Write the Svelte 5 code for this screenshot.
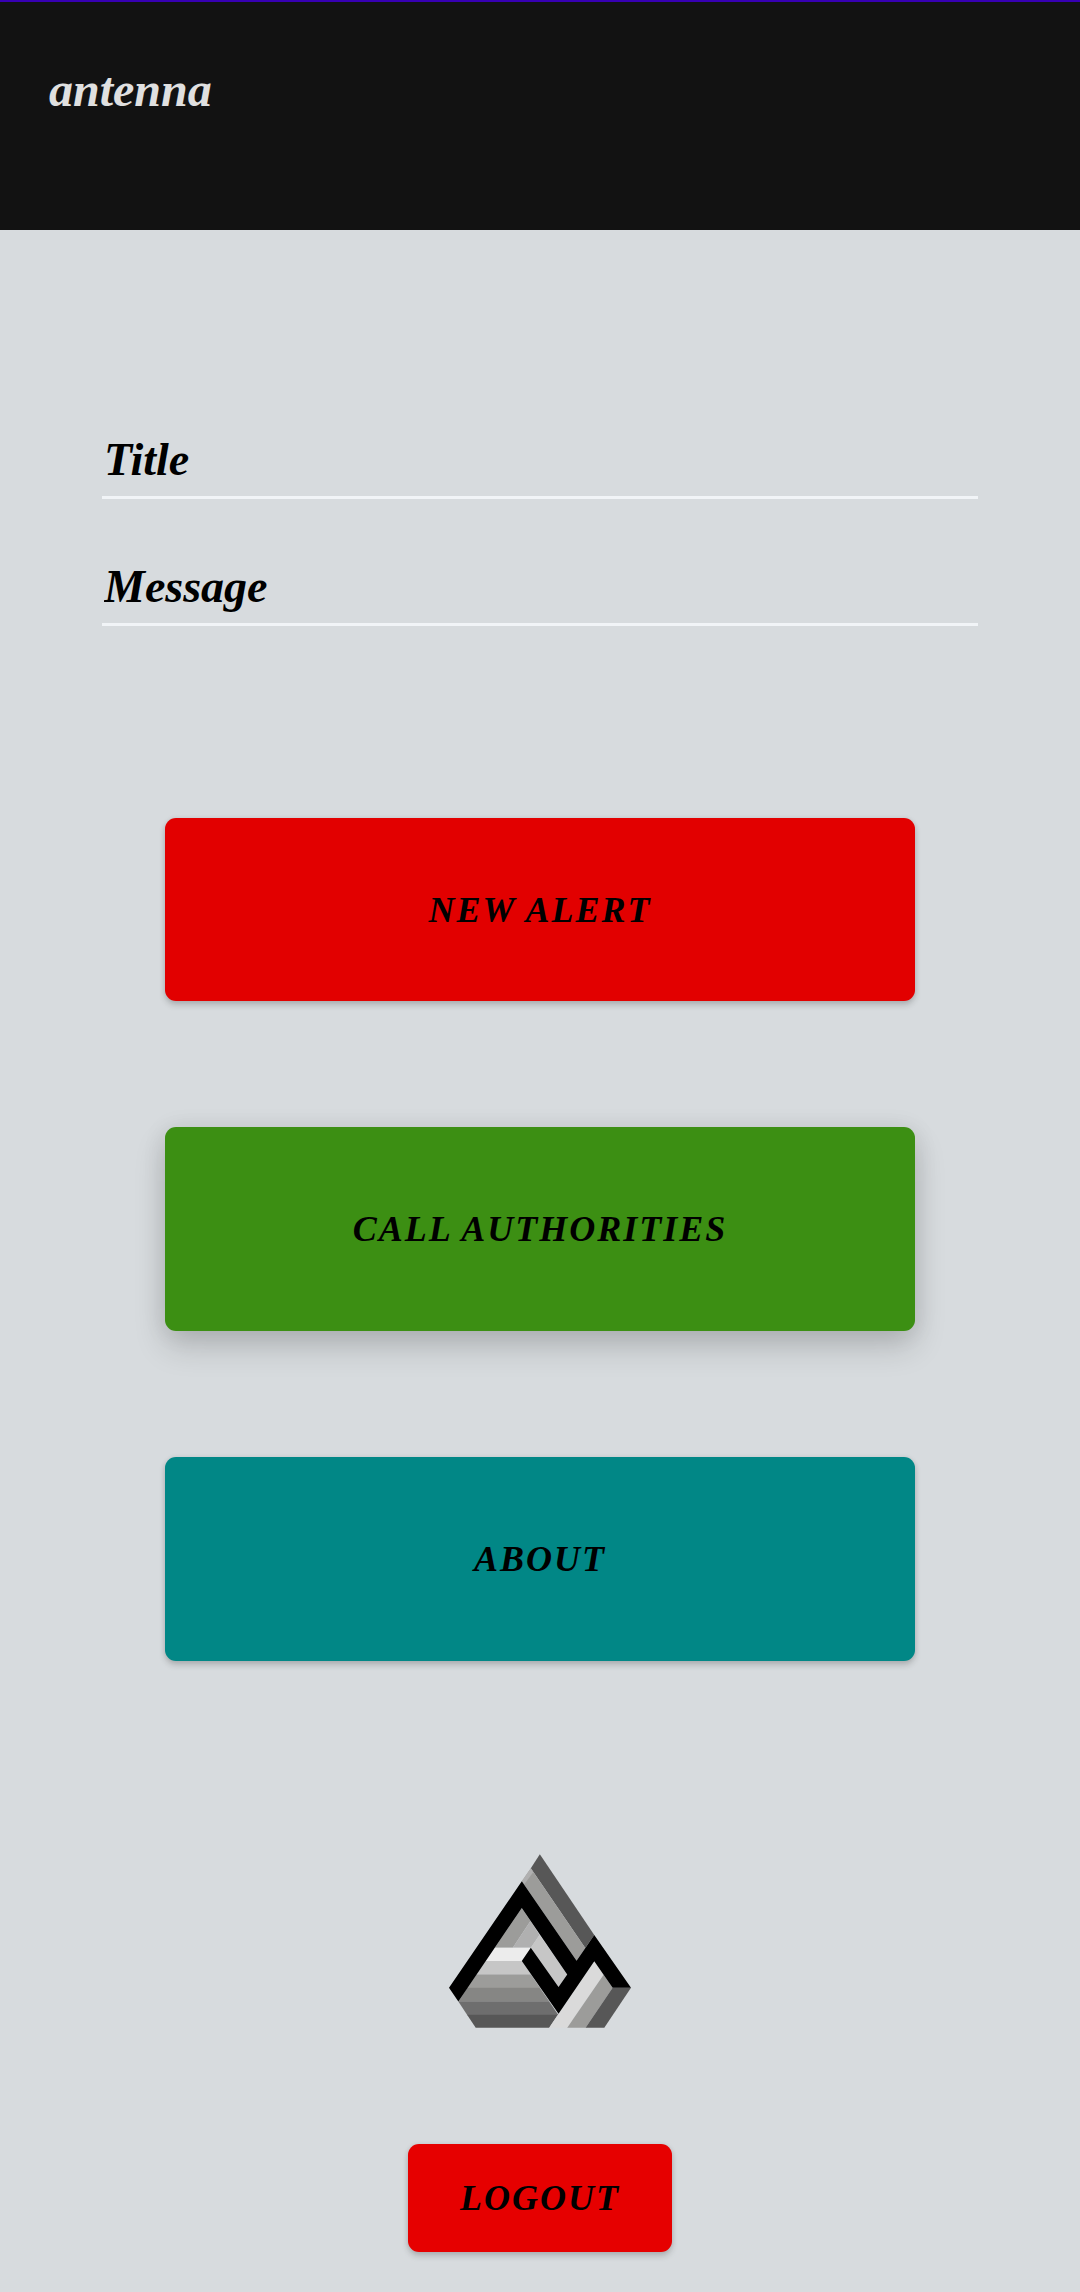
<script>
  let title = $state('');
  let message = $state('');

  const actions = [
    { label: 'NEW ALERT', kind: 'alert' },
    { label: 'CALL AUTHORITIES', kind: 'call' },
    { label: 'ABOUT', kind: 'about' }
  ];
</script>

<div class="page">
  <header>
    <h1>antenna</h1>
  </header>

  <main>
    <form class="fields" onsubmit={(e) => e.preventDefault()}>
      <input type="text" aria-label="Title" placeholder="Title" bind:value={title} />
      <input type="text" aria-label="Message" placeholder="Message" bind:value={message} />
    </form>

    <div class="actions">
      {#each actions as action}
        <button type="button" class="btn {action.kind}">{action.label}</button>
      {/each}
    </div>

    <svg class="logo" viewBox="58 42 545 520" aria-hidden="true">
      <!-- outer right slope -->
      <path fill="#575757" d="M330 42 L493 284 L466 323 L303 84 Z" />
      <path fill="#9c9c9a" d="M303 84 L466 323 L440 361 L276 123 Z" />
      <path fill="#b0b0b0" d="M303 84 L310 96 L283 133 L276 123 Z" />
      <!-- inner facets -->
      <path fill="#9c9c9a" d="M276 203 L302 242 L249 322 L195 322 Z" />
      <path fill="#b0b0b0" d="M302 242 L329 284 L303 322 L249 322 Z" />
      <path fill="#c6c6c6" d="M329 284 L412 402 L386 440 L303 322 Z" />
      <!-- stacked bands -->
      <path fill="#ececec" d="M195 322 H303 L276 362 H168 Z" />
      <path fill="#c6c6c6" d="M168 362 H276 L304 403 H140 Z" />
      <path fill="#9c9c9a" d="M140 402 H303 L331 443 H113 Z" />
      <path fill="#868684" d="M113 442 H330 L359 484 H86 Z" />
      <path fill="#6e6e6e" d="M86 483 H358 L386 524 H113 Z" />
      <path fill="#575757" d="M112 523 H384 L358 562 H138 Z" />
      <!-- lower right slope -->
      <path fill="#dadada" d="M493 363 L521 403 L412 562 H358 Z" />
      <path fill="#9c9c9a" d="M521 403 L548 442 L467 562 H412 Z" />
      <path fill="#575757" d="M548 442 H603 L523 562 H467 Z" />
      <!-- black ribbon -->
      <path
        fill="#000"
        d="M276 123 L440 361 L493 284 L603 442 H548 L493 363 L386 520 L276 362 L303 322 L386 440 L412 402 L276 203 L86 483 L58 442 Z"
      />
    </svg>

    <button type="button" class="btn logout">LOGOUT</button>
  </main>
</div>

<style>
  :global(body) {
    margin: 0;
    background: #d7dbde;
  }

  .page {
    min-height: 100vh;
    box-sizing: border-box;
    font-family: 'Liberation Serif', 'Times New Roman', serif;
    font-style: italic;
    font-weight: 700;
    background: #d7dbde;
  }

  header {
    height: 230px;
    box-sizing: border-box;
    padding: 58px 49px 0;
    border-top: 2px solid #3700b3;
    background: #121212;
  }

  h1 {
    margin: 0;
    font-size: 48px;
    line-height: 60px;
    color: #e0e0e0;
  }

  main {
    display: flex;
    flex-direction: column;
    align-items: center;
    padding: 182px 0 40px;
  }

  .fields {
    display: flex;
    flex-direction: column;
    gap: 40px;
    align-self: stretch;
    margin: 0 102px;
  }

  input {
    height: 87px;
    box-sizing: border-box;
    padding: 18px 0 8px 2px;
    border: 0;
    border-bottom: 3px solid #f1f4f7;
    border-radius: 0;
    outline: none;
    background: transparent;
    font: inherit;
    font-size: 46px;
    color: #000;
  }

  input::placeholder {
    color: #000;
    opacity: 1;
  }

  .actions {
    display: flex;
    flex-direction: column;
    gap: 126px;
    align-self: stretch;
    margin: 192px 165px 0;
  }

  .btn {
    height: 204px;
    padding: 0;
    border: 0;
    border-radius: 11px;
    font: inherit;
    font-size: 36px;
    letter-spacing: 2px;
    color: #000;
    box-shadow:
      0 4px 6px rgb(0 0 0 / 18%),
      0 0 5px rgb(0 0 0 / 8%);
    cursor: pointer;
  }

  .alert {
    height: 183px;
    background: #e20000;
  }

  .call {
    background: #3c8f13;
    box-shadow:
      0 16px 32px rgb(0 0 0 / 16%),
      0 2px 24px rgb(0 0 0 / 9%);
  }

  .about {
    background: #018786;
  }

  .logo {
    width: 182px;
    height: 174px;
    margin-top: 193px;
  }

  .logout {
    width: 264px;
    height: 108px;
    margin-top: 116px;
    background: #e60000;
  }
</style>
